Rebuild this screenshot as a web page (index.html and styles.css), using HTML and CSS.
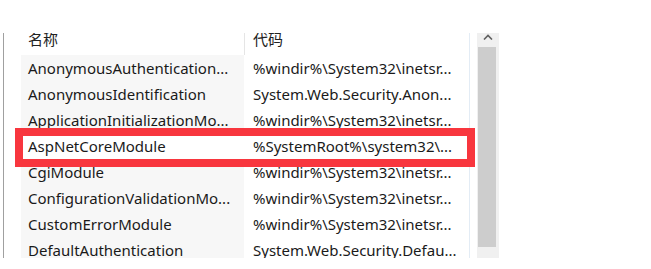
FILE: index.html
```html
<!DOCTYPE html>
<html lang="zh">
<head>
<meta charset="utf-8">
<link rel="stylesheet" href="styles.css">
</head>
<body>
<div class="page">
  <div class="lv">
    <div class="pane">
      <div class="grid">
        <div class="hdr"><div class="c1">名称</div><div class="c2">代码</div></div>
        <div class="row"><div class="c1">AnonymousAuthentication...</div><div class="c2">%windir%\System32\inetsr...</div></div>
        <div class="row"><div class="c1">AnonymousIdentification</div><div class="c2">System.Web.Security.Anon...</div></div>
        <div class="row"><div class="c1">ApplicationInitializationMo...</div><div class="c2">%windir%\System32\inetsr...</div></div>
        <div class="row row-plain"><div class="c1">AspNetCoreModule</div><div class="c2">%SystemRoot%\system32\...</div></div>
        <div class="row"><div class="c1">CgiModule</div><div class="c2">%windir%\System32\inetsr...</div></div>
        <div class="row"><div class="c1">ConfigurationValidationMo...</div><div class="c2">%windir%\System32\inetsr...</div></div>
        <div class="row"><div class="c1">CustomErrorModule</div><div class="c2">%windir%\System32\inetsr...</div></div>
        <div class="row"><div class="c1">DefaultAuthentication</div><div class="c2">System.Web.Security.Defau...</div></div>
      </div>
    </div>
    <div class="sb">
      <div class="sb-up"><svg width="10" height="6" viewBox="0 0 10 6"><polyline points="1,5.5 5,1.5 9,5.5" fill="none" stroke="#606060" stroke-width="1.6"/></svg></div>
      <div class="sb-thumb"></div>
    </div>
  </div>
  <div class="mark"></div>
</div>
</body>
</html>
```
FILE: styles.css
```css
* { box-sizing: border-box; }
html, body { margin: 0; padding: 0; background: #fff; }
body {
  font-family: "Noto Sans", "Noto Sans CJK SC", sans-serif;
  font-size: 15px;
  color: #1a1a1a;
}
.page {
  position: relative;
  width: 651px;
  height: 269px;
  padding: 33px 0 0 3px;
}
.lv {
  display: flex;
  height: 225px;
}
.pane {
  width: 474px;
  height: 100%;
  border-left: 1px solid #a0a0a0;
  overflow: hidden;
}
.grid {
  margin-left: 17px;
  width: 449px;
  min-height: 100%;
  border-right: 1px solid #e3ecf5;
}
.hdr {
  display: flex;
  height: 26px;
  margin-top: -4px;
  line-height: 20px;
  color: #222;
}
.hdr .c1 { width: 223px; padding-left: 7px; }
.hdr .c2 { flex: 1; padding-left: 8px; border-left: 1px solid #e5e5e5; }
.row {
  display: flex;
  height: 26px;
  line-height: 26px;
  white-space: nowrap;
}
.row .c1 {
  width: 223px;
  padding-left: 7px;
  background: #f7f7f7;
  overflow: hidden;
}
.row-plain .c1 { background: #fff; }
.row .c2 {
  flex: 1;
  padding-left: 9px;
  overflow: hidden;
}
.sb {
  width: 22px;
  margin-left: 0;
  height: 100%;
  background: #f0f0f0;
  display: flex;
  flex-direction: column;
}
.sb-up {
  height: 14px;
  display: flex;
  justify-content: center;
  align-items: flex-start;
  padding-top: 1px;
}
.sb-up svg { display: block; }
.sb-thumb {
  height: 200px;
  margin: 0 3px 0 1px;
  background: #cdcdcd;
}
.mark {
  position: absolute;
  left: 15px;
  top: 128px;
  width: 460px;
  height: 39px;
  border: 8px solid #f8363e;
}
```
